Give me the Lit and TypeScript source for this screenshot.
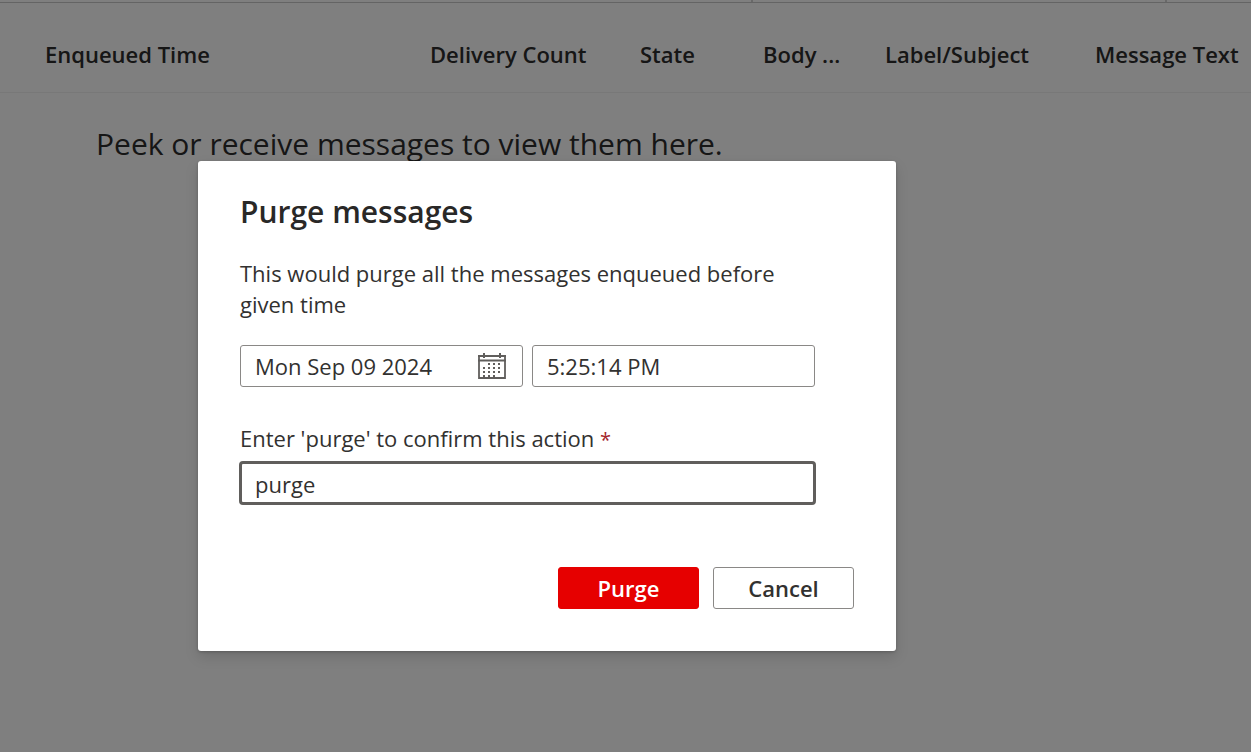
import { LitElement, html, css, svg } from "lit";
import { customElement, state } from "lit/decorators.js";

const COLUMNS = [
  { label: "Enqueued Time", cls: "time" },
  { label: "Delivery Count", cls: "count" },
  { label: "State", cls: "state" },
  { label: "Body ...", cls: "body" },
  { label: "Label/Subject", cls: "subject" },
  { label: "Message Text", cls: "text" },
];

// Day squares of the calendar glyph, row by row.
const DAY_ROWS = [
  [11, 16, 21],
  [6, 11, 16, 21],
  [6, 11, 16, 21],
  [6, 11, 16],
];

@customElement("message-list")
class MessageList extends LitElement {
  static styles = css`
    :host {
      display: block;
    }
    .tabs {
      display: grid;
      grid-template-columns: 751fr 414fr 86fr;
      height: 2px;
      border-bottom: 1px solid #c8c8c8;
    }
    .tab + .tab {
      border-left: 2px solid #d2d2d2;
    }
    .table {
      width: 100%;
      table-layout: fixed;
      border-collapse: separate;
      border-spacing: 0;
    }
    .head {
      height: 90px;
      padding: 12px 0 0;
      box-sizing: border-box;
      border-bottom: 1px solid #f0f0f0;
      text-align: left;
      font-size: 22px;
      line-height: 30px;
      font-weight: 600;
      white-space: nowrap;
    }
    .time {
      width: 430px;
      padding-left: 45px;
    }
    .count {
      width: 210px;
    }
    .state {
      width: 123px;
    }
    .body {
      width: 122px;
    }
    .subject {
      width: 210px;
    }
    .empty {
      padding: 27px 0 0 96px;
      text-align: left;
      font-size: 30px;
      line-height: 48px;
      font-weight: 400;
    }
  `;

  render() {
    return html`
      <div class="tabs">
        <div class="tab"></div>
        <div class="tab"></div>
        <div class="tab"></div>
      </div>
      <table class="table">
        <thead>
          <tr>
            ${COLUMNS.map((c) => html`<th scope="col" class="head ${c.cls}">${c.label}</th>`)}
          </tr>
        </thead>
        <tbody>
          <tr>
            <td class="empty" colspan="6">Peek or receive messages to view them here.</td>
          </tr>
        </tbody>
      </table>
    `;
  }
}

@customElement("purge-dialog")
class PurgeDialog extends LitElement {
  static styles = css`
    :host {
      display: block;
      width: 100%;
      max-width: 698px;
    }
    .dialog {
      box-sizing: border-box;
      padding: 30px 42px 42px;
      background: #ffffff;
      border-radius: 3px;
      box-shadow: 0 6px 14px rgba(0, 0, 0, 0.13), 0 1px 3px rgba(0, 0, 0, 0.2);
      color: #323130;
      font-size: 22px;
      line-height: 31px;
    }
    .title {
      margin: 0;
      font-size: 30px;
      line-height: 42px;
      font-weight: 600;
      color: #292827;
    }
    .form {
      max-width: 575px;
    }
    .description {
      margin: 25px 0;
    }
    .when {
      display: grid;
      grid-template-columns: 1fr 1fr;
      gap: 9px;
    }
    .box {
      display: flex;
      align-items: center;
      box-sizing: border-box;
      height: 42px;
      padding-right: 15px;
      border: 1px solid #8a8886;
      border-radius: 3px;
    }
    .input {
      flex: 1;
      min-width: 0;
      width: 100%;
      box-sizing: border-box;
      height: 38px;
      padding: 0 14px;
      border: 0;
      outline: 0;
      background: transparent;
      font: inherit;
      color: inherit;
    }
    .calendar {
      display: block;
      flex: none;
    }
    .label {
      display: block;
      margin-top: 36px;
    }
    .required {
      color: #a4262c;
      font-size: 20px;
      line-height: 1;
    }
    .confirm {
      height: 44px;
      margin: 7px -1px 0;
      padding: 0;
      border: 3px solid #605e5c;
      border-radius: 4px;
    }
    .confirm .input {
      padding: 2px 13px 0;
    }
    .actions {
      display: flex;
      justify-content: flex-end;
      gap: 14px;
      margin-top: 62px;
    }
    .button {
      min-width: 141px;
      height: 42px;
      padding: 0 28px;
      border: 1px solid #8a8886;
      border-radius: 3px;
      background: #ffffff;
      font: inherit;
      font-weight: 600;
      color: #323130;
    }
    .primary {
      border-color: #e60000;
      background: #e60000;
      color: #ffffff;
    }
  `;

  @state() private confirmation = "purge";

  render() {
    return html`
      <section class="dialog" role="dialog" aria-modal="true" aria-labelledby="title">
        <h2 class="title" id="title">Purge messages</h2>
        <div class="form">
          <p class="description">This would purge all the messages enqueued before given time</p>
          <div class="when">
            <div class="box">
              <input class="input" aria-label="Date" .value=${"Mon Sep 09 2024"} />
              <svg class="calendar" width="30" height="28" viewBox="0 0 30 28" aria-hidden="true">
                <path
                  d="M1 4H29M1 8.500H29M2 3V26H28V3"
                  fill="none"
                  stroke="#605e5c"
                  stroke-width="1.800"
                />
                <path d="M7 1V6M23 1V6" stroke="#605e5c" stroke-width="2" />
                ${DAY_ROWS.map((row, r) =>
                  row.map(
                    (x) => svg`<rect x=${x} y=${11 + r * 4} width="2" height="2" fill="#605e5c" />`
                  )
                )}
              </svg>
            </div>
            <div class="box">
              <input class="input" aria-label="Time" .value=${"5:25:14 PM"} />
            </div>
          </div>
          <label class="label" for="confirm">
            Enter 'purge' to confirm this action <span class="required">*</span>
          </label>
          <div class="box confirm">
            <input
              class="input"
              id="confirm"
              required
              .value=${this.confirmation}
              @input=${(e: Event) => (this.confirmation = (e.target as HTMLInputElement).value)}
            />
          </div>
        </div>
        <div class="actions">
          <button class="button primary" type="button" ?disabled=${this.confirmation !== "purge"}>
            Purge
          </button>
          <button class="button" type="button">Cancel</button>
        </div>
      </section>
    `;
  }
}

@customElement("app-root")
class AppRoot extends LitElement {
  static styles = css`
    :host {
      display: block;
      padding-right: 2px;
      background: #ffffff;
      font-family: "Segoe UI", "Open Sans", "Noto Sans", sans-serif;
      color: #2d2c2c;
    }
    .page {
      position: relative;
      min-height: 100vh;
      overflow: hidden;
    }
    .overlay {
      position: absolute;
      inset: 0;
      box-sizing: border-box;
      padding: 161px 198px 0;
      background: rgba(0, 0, 0, 0.5);
    }
  `;

  render() {
    return html`
      <main class="page">
        <message-list></message-list>
        <div class="overlay">
          <purge-dialog></purge-dialog>
        </div>
      </main>
    `;
  }
}
